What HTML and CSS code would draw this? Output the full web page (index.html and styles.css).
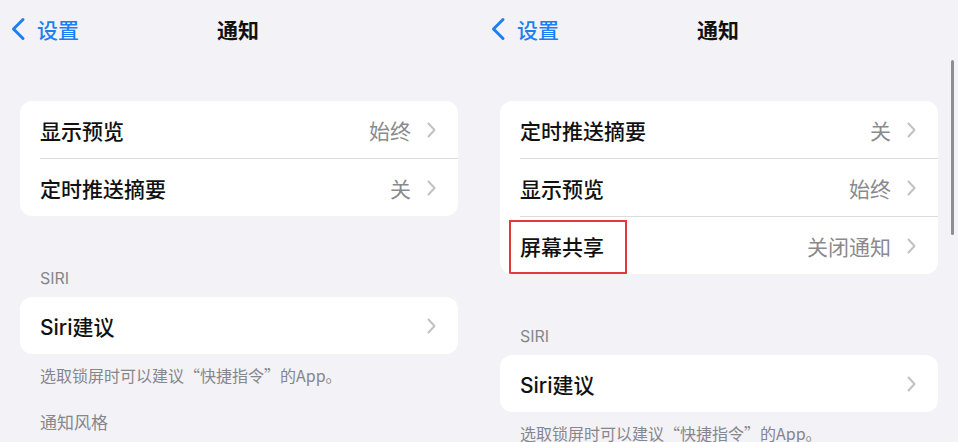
FILE: index.html
```html
<!DOCTYPE html>
<html lang="zh-CN">

<head>
    <meta charset="UTF-8">
    <meta name="viewport" content="width=device-width, initial-scale=1.0">
    <title>通知</title>
    <link rel="stylesheet" href="styles.css">
</head>

<body>
    <!-- 左边：原来的通知设置 -->
    <div class="screen">
        <div class="navbar">
            <div class="back">
                <svg class="back-icon" width="16" height="24" viewBox="0 0 16 24">
                    <path d="M13 2.5 L3.5 12 L13 21.5" />
                </svg>
                <span>设置</span>
            </div>
            <div class="title">通知</div>
        </div>

        <div class="card first">
            <div class="row">
                <span class="label">显示预览</span>
                <span class="value">始终</span>
                <svg class="chevron" width="9" height="16" viewBox="0 0 9 16"><path d="M1.5 1.5 L7.5 8 L1.5 14.5" /></svg>
            </div>
            <div class="row">
                <span class="label">定时推送摘要</span>
                <span class="value">关</span>
                <svg class="chevron" width="9" height="16" viewBox="0 0 9 16"><path d="M1.5 1.5 L7.5 8 L1.5 14.5" /></svg>
            </div>
        </div>

        <div class="section-title">SIRI</div>
        <div class="card">
            <div class="row">
                <span class="label">Siri建议</span>
                <svg class="chevron" width="9" height="16" viewBox="0 0 9 16"><path d="M1.5 1.5 L7.5 8 L1.5 14.5" /></svg>
            </div>
        </div>
        <div class="footnote">选取锁屏时可以建议“快捷指令”的App。</div>
        <div class="section-title big">通知风格</div>
    </div>

    <!-- 右边：多了屏幕共享 -->
    <div class="screen">
        <div class="navbar">
            <div class="back">
                <svg class="back-icon" width="16" height="24" viewBox="0 0 16 24">
                    <path d="M13 2.5 L3.5 12 L13 21.5" />
                </svg>
                <span>设置</span>
            </div>
            <div class="title">通知</div>
        </div>

        <div class="card first">
            <div class="row">
                <span class="label">定时推送摘要</span>
                <span class="value">关</span>
                <svg class="chevron" width="9" height="16" viewBox="0 0 9 16"><path d="M1.5 1.5 L7.5 8 L1.5 14.5" /></svg>
            </div>
            <div class="row">
                <span class="label">显示预览</span>
                <span class="value">始终</span>
                <svg class="chevron" width="9" height="16" viewBox="0 0 9 16"><path d="M1.5 1.5 L7.5 8 L1.5 14.5" /></svg>
            </div>
            <div class="row marked">
                <span class="label">屏幕共享</span>
                <span class="value">关闭通知</span>
                <svg class="chevron" width="9" height="16" viewBox="0 0 9 16"><path d="M1.5 1.5 L7.5 8 L1.5 14.5" /></svg>
            </div>
        </div>

        <div class="section-title">SIRI</div>
        <div class="card">
            <div class="row">
                <span class="label">Siri建议</span>
                <svg class="chevron" width="9" height="16" viewBox="0 0 9 16"><path d="M1.5 1.5 L7.5 8 L1.5 14.5" /></svg>
            </div>
        </div>
        <div class="footnote">选取锁屏时可以建议“快捷指令”的App。</div>

        <div class="scrollbar"></div>
    </div>
</body>

</html>
```

FILE: styles.css
```css
body {
    margin: 0;
    padding: 0;
    height: 442px;
    overflow: hidden;
    display: flex;
    background-color: #f2f2f7;
    font-family: Inter, "Noto Sans CJK SC", sans-serif;
}

.screen {
    position: relative;
    width: 479px;
    padding: 0 21px 0 20px;
    box-sizing: border-box;
}

.screen + .screen {
    padding: 0 20px 0 21px;
}

.navbar {
    position: relative;
    height: 58px;
    display: flex;
    align-items: center;
    justify-content: center;
}

.back {
    position: absolute;
    left: -10px;
    top: 0;
    height: 58px;
    display: flex;
    align-items: center;
    gap: 11px;
    color: #1c7ff2;
    font-size: 21px;
    font-weight: 500;
}

.back-icon path {
    fill: none;
    stroke: #1c7ff2;
    stroke-width: 3;
    stroke-linecap: round;
    stroke-linejoin: round;
}

.title {
    font-size: 21px;
    font-weight: 600;
    color: #111;
    margin-left: -2px;
}

.card {
    background-color: white;
    border-radius: 12px;
    overflow: hidden;
}

.card.first {
    margin-top: 43px;
}

.row {
    position: relative;
    height: 57px;
    display: flex;
    align-items: center;
    padding: 0 22px 0 20px;
}

.row + .row {
    border-top: 1px solid transparent;
}

.row + .row::before {
    content: "";
    position: absolute;
    left: 20px;
    right: 0;
    top: -1px;
    height: 1px;
    background-color: #dddde0;
}

.label {
    flex: 1;
    font-size: 21px;
    font-weight: 500;
    color: #111;
}

.value {
    font-size: 21px;
    color: #8a8a8e;
    margin-right: 16px;
}

.chevron path {
    fill: none;
    stroke: #c2c2c6;
    stroke-width: 2;
    stroke-linecap: round;
    stroke-linejoin: round;
}

/* 红框标注 */
.marked::after {
    content: "";
    position: absolute;
    left: 9px;
    top: 3px;
    width: 118px;
    height: 54px;
    border: 2px solid #e2393d;
    box-sizing: border-box;
}

.section-title {
    margin-top: 52px;
    margin-bottom: 9px;
    padding-left: 20px;
    font-size: 16px;
    line-height: 20px;
    color: #86868b;
}

.section-title.big {
    margin-top: 27px;
    font-size: 17px;
    line-height: 22px;
}

.footnote {
    margin-top: 11px;
    padding-left: 20px;
    font-family: "Noto Sans CJK SC", sans-serif;
    font-size: 16px;
    line-height: 20px;
    color: #86868b;
}

.scrollbar {
    position: absolute;
    right: 4px;
    top: 60px;
    width: 3px;
    height: 175px;
    border-radius: 2px;
    background-color: #8e8e92;
}
```
